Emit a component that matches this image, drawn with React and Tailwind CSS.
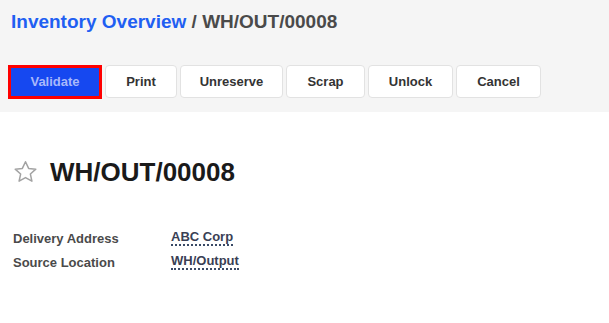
import React from 'react'

const buttons = [
  { label: 'Print', w: 'w-[72px]' },
  { label: 'Unreserve', w: 'w-[103px]' },
  { label: 'Scrap', w: 'w-[79px]' },
  { label: 'Unlock', w: 'w-[85px]' },
  { label: 'Cancel', w: 'w-[85px]' },
]

export default function App() {
  return (
    <div className="min-h-screen bg-white font-['Liberation_Sans',Arial,sans-serif]">
      <div className="bg-[#f5f5f5] h-[112px] pl-[11px] pt-[10px]">
        <h1 className="text-[19px] font-bold leading-[23px]">
          <span className="text-[#1f5ff2]">Inventory Overview</span>
          <span className="text-[#4a4a4a]"> / WH/OUT/00008</span>
        </h1>
        <div className="flex gap-[3px] mt-[32px] -ml-[3px]">
          <button className="h-[34px] w-[94px] border-[3px] border-[#ff0000] bg-[#1648f0] text-[#a9b8fa] text-[13px] font-bold">
            Validate
          </button>
          {buttons.map((b) => (
            <button
              key={b.label}
              className={`${b.w} h-[33px] bg-white border border-[#e2e2e2] rounded-[4px] text-[13px] font-bold text-[#333]`}
            >
              {b.label}
            </button>
          ))}
        </div>
      </div>
      <div className="pl-[12px] pt-[44px]">
        <div className="flex items-center gap-[11px]">
          <svg width="27" height="26" viewBox="0 0 24 24" fill="none" stroke="#a3a3a3" strokeWidth="1.4" strokeLinejoin="round">
            <path d="M12 2.5l2.9 6.2 6.6.7-5 4.5 1.4 6.6L12 17.2l-5.9 3.3 1.4-6.6-5-4.5 6.6-.7z" />
          </svg>
          <h2 className="text-[26px] font-bold text-[#1a1a1a] leading-[32px]">WH/OUT/00008</h2>
        </div>
        <div className="mt-[41px] pl-[1px] grid grid-cols-[158px_auto] auto-rows-[24px] text-[13px] font-bold leading-[16px]">
          <div className="text-[#4a4a4a] pt-[2px]">Delivery Address</div>
          <div>
            <span className="text-[#3a3f55] border-b-2 border-dotted border-[#3a4a66]">ABC Corp</span>
          </div>
          <div className="text-[#4a4a4a] pt-[2px]">Source Location</div>
          <div>
            <span className="text-[#3a3f55] border-b-2 border-dotted border-[#3a4a66]">WH/Output</span>
          </div>
        </div>
      </div>
    </div>
  )
}
